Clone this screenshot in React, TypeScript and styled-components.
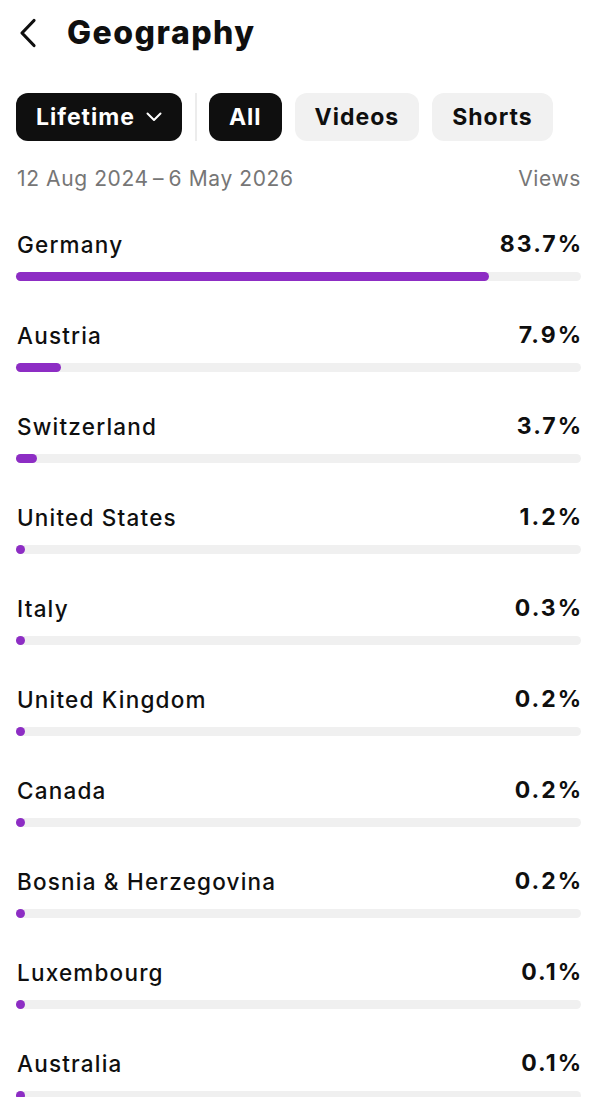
import React from "react";
import styled, { createGlobalStyle } from "styled-components";

const Global = createGlobalStyle`
  html, body { margin: 0; padding: 0; background: #fff; }
  body { font-family: Inter, "Noto Sans", "Liberation Sans", sans-serif; color: #0f0f0f; -webkit-font-smoothing: antialiased; }
`;

const Page = styled.div`
  width: 600px;
  height: 1097px;
  overflow: hidden;
  box-sizing: border-box;
  padding: 0 19px 0 16px;
`;

const Header = styled.header`
  height: 66px;
  display: flex;
  align-items: center;
  gap: 28px;
  padding-left: 2px;
`;

const BackButton = styled.button`
  border: 0;
  background: none;
  padding: 0;
  width: 21px;
  height: 30px;
  display: flex;
  align-items: center;
  justify-content: center;
  color: #0f0f0f;
`;

const Title = styled.h1`
  margin: 0;
  font-size: 32px;
  font-weight: 800;
  letter-spacing: 1.5px;
  line-height: 1;
`;

const Filters = styled.div`
  margin-top: 27px;
  display: flex;
  align-items: center;
  height: 48px;
`;

const Pill = styled.button<{ $active?: boolean }>`
  height: 48px;
  border: 0;
  border-radius: 12px;
  padding: 0 20px;
  display: flex;
  align-items: center;
  gap: 11px;
  font-family: inherit;
  font-size: 23px;
  font-weight: 700;
  letter-spacing: 1px;
  background: ${(p) => (p.$active ? "#0f0f0f" : "#f1f1f1")};
  color: ${(p) => (p.$active ? "#fff" : "#0f0f0f")};
  margin-right: 13px;
`;

const Divider = styled.div`
  width: 2px;
  height: 48px;
  background: #ececec;
  margin: 0 12px 0 0;
`;

const DateRow = styled.div`
  margin-top: 23px;
  height: 28px;
  display: flex;
  align-items: center;
  justify-content: space-between;
  font-size: 21px;
  letter-spacing: 0.6px;
  color: #767676;
  padding-left: 1px;
`;

const List = styled.div`
  margin-top: 38px;
  display: flex;
  flex-direction: column;
`;

const Row = styled.div`
  display: flex;
  flex-direction: column;
  height: 91px;
`;

const RowHead = styled.div`
  height: 28px;
  display: flex;
  align-items: center;
  justify-content: space-between;
  font-size: 22.5px;
  padding-left: 1px;
`;

const Country = styled.span`
  font-weight: 500;
  letter-spacing: 1.2px;
`;

const Percent = styled.span`
  font-weight: 700;
  font-size: 23px;
  letter-spacing: 2px;
  margin-right: -2px;
`;

const Track = styled.div`
  margin-top: 14px;
  height: 9px;
  border-radius: 5px;
  background: #f0f0f0;
  display: flex;
`;

const Fill = styled.div`
  height: 9px;
  min-width: 9px;
  border-radius: 5px;
  background: #8d2dc4;
`;

const data: [string, number][] = [
  ["Germany", 83.7],
  ["Austria", 7.9],
  ["Switzerland", 3.7],
  ["United States", 1.2],
  ["Italy", 0.3],
  ["United Kingdom", 0.2],
  ["Canada", 0.2],
  ["Bosnia & Herzegovina", 0.2],
  ["Luxembourg", 0.1],
  ["Australia", 0.1],
];

export default function App() {
  return (
    <Page>
      <Global />
      <Header>
        <BackButton aria-label="Back">
          <svg width="21" height="30" viewBox="0 0 21 30" fill="none">
            <path d="M16 2.5 L4 15 L16 27.5" stroke="#0f0f0f" strokeWidth="3.2" strokeLinecap="round" strokeLinejoin="round" />
          </svg>
        </BackButton>
        <Title>Geography</Title>
      </Header>
      <Filters>
        <Pill $active>
          Lifetime
          <svg width="16" height="10" viewBox="0 0 16 10" fill="none">
            <path d="M1.5 1.5 L8 8 L14.5 1.5" stroke="#fff" strokeWidth="2" strokeLinecap="round" strokeLinejoin="round" />
          </svg>
        </Pill>
        <Divider />
        <Pill $active>All</Pill>
        <Pill>Videos</Pill>
        <Pill>Shorts</Pill>
      </Filters>
      <DateRow>
        <span>12 Aug 2024{"\u2009–\u2009"}6 May 2026</span>
        <span>Views</span>
      </DateRow>
      <List>
        {data.map(([name, v]) => (
          <Row key={name}>
            <RowHead>
              <Country>{name}</Country>
              <Percent>{v.toFixed(1)}%</Percent>
            </RowHead>
            <Track>
              <Fill style={{ width: `${v}%` }} />
            </Track>
          </Row>
        ))}
      </List>
    </Page>
  );
}
